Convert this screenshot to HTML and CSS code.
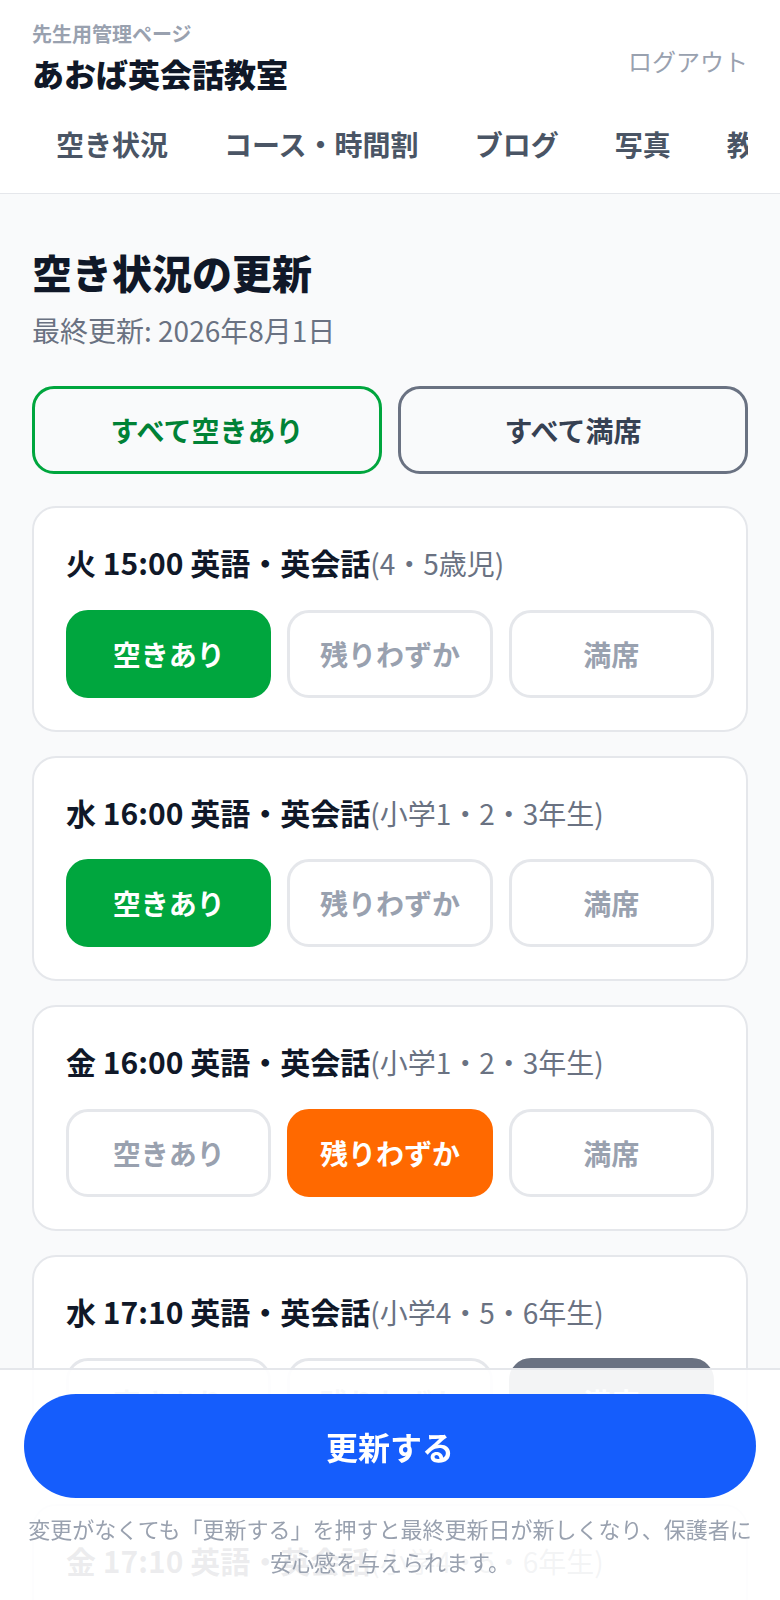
FILE: index.html
```html
<!DOCTYPE html>
<html lang="ja">
<head>
  <meta charset="UTF-8">
  <meta name="viewport" content="width=device-width, initial-scale=1.0">
  <title>あおば英会話教室 – 空き状況の更新</title>
  <link rel="stylesheet" href="styles.css">
</head>
<body>
  <!-- ヘッダー -->
  <header class="site-header">
    <div class="header-top">
      <div class="brand">
        <div class="brand-sub">先生用管理ページ</div>
        <div class="brand-title">あおば英会話教室</div>
      </div>
      <a class="logout" href="#">ログアウト</a>
    </div>
    <nav class="tabs">
      <a href="#">空き状況</a>
      <a href="#">コース・時間割</a>
      <a href="#">ブログ</a>
      <a href="#">写真</a>
      <a href="#">教室情報</a>
    </nav>
  </header>

  <!-- 空き状況 -->
  <main class="page">
    <h2 class="page-title">空き状況の更新</h2>
    <p class="updated">最終更新: 2026年8月1日</p>

    <div class="bulk">
      <button class="bulk-btn bulk-open">すべて空きあり</button>
      <button class="bulk-btn bulk-full">すべて満席</button>
    </div>

    <div class="slots">
      <div class="slot">
        <div class="slot-name">火 15:00 英語・英会話<span>(4・5歳児)</span></div>
        <div class="status-row">
          <button class="status is-open">空きあり</button>
          <button class="status">残りわずか</button>
          <button class="status">満席</button>
        </div>
      </div>

      <div class="slot">
        <div class="slot-name">水 16:00 英語・英会話<span>(小学1・2・3年生)</span></div>
        <div class="status-row">
          <button class="status is-open">空きあり</button>
          <button class="status">残りわずか</button>
          <button class="status">満席</button>
        </div>
      </div>

      <div class="slot">
        <div class="slot-name">金 16:00 英語・英会話<span>(小学1・2・3年生)</span></div>
        <div class="status-row">
          <button class="status">空きあり</button>
          <button class="status is-few">残りわずか</button>
          <button class="status">満席</button>
        </div>
      </div>

      <div class="slot">
        <div class="slot-name">水 17:10 英語・英会話<span>(小学4・5・6年生)</span></div>
        <div class="status-row">
          <button class="status">空きあり</button>
          <button class="status">残りわずか</button>
          <button class="status is-full">満席</button>
        </div>
      </div>

      <div class="slot">
        <div class="slot-name">金 17:10 英語・英会話<span>(小学4・5・6年生)</span></div>
        <div class="status-row">
          <button class="status is-open">空きあり</button>
          <button class="status">残りわずか</button>
          <button class="status">満席</button>
        </div>
      </div>
    </div>
  </main>

  <!-- 下の固定バー -->
  <div class="save-bar">
    <button class="save-btn">更新する</button>
    <p class="save-note">変更がなくても「更新する」を押すと最終更新日が新しくなり、保護者に安心感を与えられます。</p>
  </div>
</body>
</html>
```

FILE: styles.css
```css
body {
  margin: 0;
  padding: 0;
  font-family: "Noto Sans CJK JP", "Noto Sans", sans-serif;
  background-color: #f9fafb;
  color: #101828;
}

button {
  font-family: inherit;
  cursor: pointer;
}

/* === ヘッダー === */
.site-header {
  background-color: #fff;
  border-bottom: 1px solid #e5e7eb;
  padding: 20px 32px 0;
}

.header-top {
  display: flex;
  justify-content: space-between;
  align-items: center;
}

.brand-sub {
  font-size: 20px;
  line-height: 28px;
  font-weight: 700;
  color: #99a1af;
}

.brand-title {
  margin-top: 4px;
  font-size: 32px;
  line-height: 42px;
  font-weight: 900;
  color: #101828;
}

.logout {
  padding-top: 8px;
  font-size: 24px;
  line-height: 36px;
  color: #99a1af;
  text-decoration: none;
}

.tabs {
  display: flex;
  margin-top: 8px;
  margin-left: -4px;
  overflow: hidden;
  white-space: nowrap;
}

.tabs a {
  flex-shrink: 0;
  padding: 21px 28px 28px;
  font-size: 28px;
  line-height: 42px;
  font-weight: 700;
  color: #4a5565;
  text-decoration: none;
}

/* === 本文 === */
.page {
  padding: 48px 32px 260px;
}

.page-title {
  margin: 0;
  font-size: 40px;
  line-height: 60px;
  font-weight: 900;
  color: #101828;
}

.updated {
  margin: 8px 0 0;
  font-size: 28px;
  line-height: 40px;
  color: #6a7282;
}

/* === 一括ボタン === */
.bulk {
  display: grid;
  grid-template-columns: 1fr 1fr;
  gap: 16px;
  margin-top: 36px;
}

.bulk-btn {
  padding: 21px 0;
  font-size: 28px;
  line-height: 40px;
  font-weight: 700;
  background-color: transparent;
  border-radius: 22px;
}

.bulk-open {
  border: 3px solid #00a63e;
  color: #008236;
}

.bulk-full {
  border: 3px solid #6a7282;
  color: #364153;
}

/* === 時間割カード === */
.slots {
  display: flex;
  flex-direction: column;
  gap: 24px;
  margin-top: 32px;
}

.slot {
  background-color: #fff;
  border: 2px solid #e5e7eb;
  border-radius: 24px;
  padding: 32px;
}

.slot-name {
  font-size: 30px;
  line-height: 44.5px;
  font-weight: 700;
  color: #101828;
}

.slot-name span {
  font-size: 28px;
  font-weight: 400;
  color: #6a7282;
}

.status-row {
  display: grid;
  grid-template-columns: repeat(3, 1fr);
  gap: 16px;
  margin-top: 24px;
}

.status {
  padding: 21px 0;
  font-size: 28px;
  line-height: 40px;
  font-weight: 700;
  color: #99a1af;
  background-color: #fff;
  border: 3px solid #e5e7eb;
  border-radius: 22px;
}

.status.is-open {
  background-color: #00a63e;
  border-color: #00a63e;
  color: #fff;
}

.status.is-few {
  background-color: #ff6900;
  border-color: #ff6900;
  color: #fff;
}

.status.is-full {
  background-color: #6a7282;
  border-color: #6a7282;
  color: #fff;
}

/* === 下の固定バー === */
.save-bar {
  position: fixed;
  left: 0;
  right: 0;
  bottom: 0;
  padding: 24px 24px 22px;
  background-color: rgba(255, 255, 255, 0.92);
  border-top: 2px solid #e5e7eb;
}

.save-btn {
  display: block;
  width: 100%;
  padding: 28px 0;
  font-size: 32px;
  line-height: 48px;
  font-weight: 700;
  color: #fff;
  background-color: #155dfc;
  border: none;
  border-radius: 999px;
}

.save-note {
  margin: 14px 0 0;
  font-size: 22px;
  line-height: 33px;
  color: #99a1af;
  text-align: center;
}
```
